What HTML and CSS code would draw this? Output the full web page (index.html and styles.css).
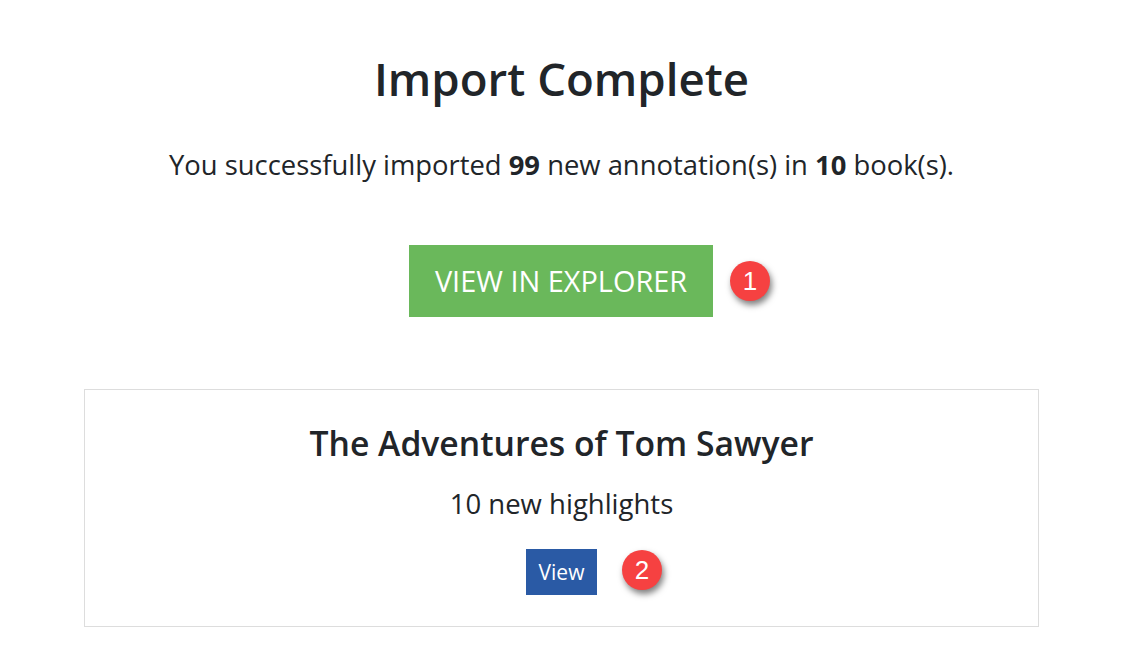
FILE: index.html
```html
<!DOCTYPE html>
<html lang="en">
<head>
    <meta charset="UTF-8">
    <title>Import Complete</title>
    <link rel="stylesheet" href="styles.css">
</head>
<body>
<div class="page">
    <h1 class="title">Import Complete</h1>
    <p class="summary">You successfully imported <b>99</b> new annotation(s) in <b>10</b> book(s).</p>

    <div class="action">
        <a class="btn-explorer" href="#">VIEW IN EXPLORER</a>
        <span class="marker marker-large">1</span>
    </div>

    <div class="book-card">
        <h2 class="book-title">The Adventures of Tom Sawyer</h2>
        <p class="book-count">10 new highlights</p>
        <div class="action">
            <a class="btn-view" href="#">View</a>
            <span class="marker marker-small">2</span>
        </div>
    </div>
</div>
</body>
</html>
```

FILE: styles.css
```css
body {
    margin: 0;
    background-color: #fff;
    color: #212529;
    font-family: 'Open Sans', sans-serif;
}

.page {
    width: 955px;
    margin: 0 0 0 84px;
    padding-top: 48px;
    text-align: center;
}

.title {
    margin: 0;
    font-size: 45.6px;
    line-height: 60px;
    font-weight: 600;
}

.summary {
    margin: 39px 0 0;
    font-size: 27.4px;
    line-height: 36px;
    font-weight: 400;
}

.action {
    position: relative;
    display: flex;
    justify-content: center;
}

.page > .action {
    margin-top: 62px;
}

.btn-explorer {
    display: block;
    width: 304px;
    height: 72px;
    margin-right: 1px;
    line-height: 72px;
    background-color: #6ab85b;
    color: #fff;
    font-size: 28.9px;
    text-decoration: none;
}

.marker {
    position: absolute;
    border-radius: 50%;
    background-color: #f64141;
    color: #fff;
    font-family: 'Liberation Sans', sans-serif;
    text-align: center;
    box-shadow: 2px 4px 6px rgba(0, 0, 0, 0.5);
}

.marker-large {
    left: 646px;
    top: 16px;
    width: 40px;
    height: 40px;
    line-height: 40px;
    font-size: 26px;
}

.marker-small {
    left: 537px;
    top: 1px;
    width: 40px;
    height: 40px;
    line-height: 40px;
    font-size: 26px;
}

.book-card {
    margin-top: 72px;
    height: 238px;
    box-sizing: border-box;
    border: 1px solid #ddd;
    padding-top: 30px;
}

.book-title {
    margin: 0;
    font-size: 33.7px;
    line-height: 46px;
    font-weight: 600;
}

.book-count {
    margin: 20px 0 0;
    font-size: 27.5px;
    line-height: 36px;
    font-weight: 400;
}

.book-count + .action {
    margin-top: 27px;
}

.btn-view {
    display: block;
    width: 71px;
    height: 46px;
    line-height: 46px;
    background-color: #2a5aa5;
    color: #fff;
    font-size: 21px;
    text-decoration: none;
}
```
